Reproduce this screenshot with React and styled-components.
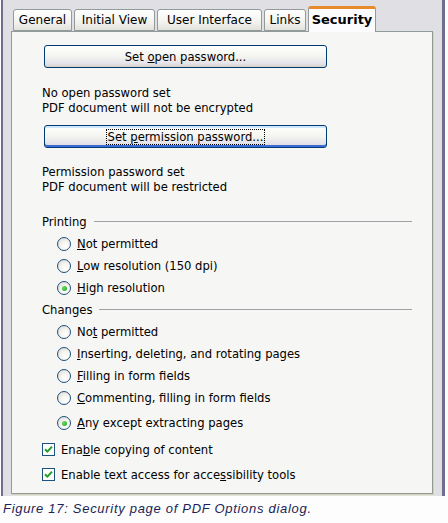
import React from 'react'
import styled, { createGlobalStyle } from 'styled-components'

const GlobalStyle = createGlobalStyle`
  html, body {
    margin: 0;
    padding: 0;
    background: #fdfdfd;
  }
  body {
    font-family: "DejaVu Sans", "Liberation Sans", sans-serif;
    font-size: 11.6px;
    color: #000;
  }
`

const Frame = styled.div`
  margin: 0 3px 0 1px;
  border-left: 2px solid #6f6e8f;
  border-right: 3px solid #6f6e8f;
  background: #e0dfe3;
  padding: 6px 8px 2px 8px;
`

const TabBar = styled.div`
  display: flex;
  align-items: flex-end;
  gap: 2px;
  margin-left: 2px;
  height: 25px;
  position: relative;
  z-index: 1;
`

const Tab = styled.div`
  box-sizing: border-box;
  width: ${p => p.$w}px;
  height: ${p => (p.$active ? 26 : 22)}px;
  margin-bottom: ${p => (p.$active ? -1 : 0)}px;
  border: 1px solid #919b9c;
  border-bottom: ${p => (p.$active ? 'none' : '1px solid #919b9c')};
  border-top: ${p => (p.$active ? '3px solid #e68b2c' : '1px solid #919b9c')};
  border-radius: 3px 3px 0 0;
  background: ${p => (p.$active
    ? '#fcfcfe'
    : 'linear-gradient(#ffffff 0%, #f3f3ef 60%, #e2e1dc 100%)')};
  display: flex;
  align-items: center;
  justify-content: center;
  font-size: ${p => (p.$active ? 13 : 12)}px;
  font-weight: ${p => (p.$active ? 'bold' : 'normal')};
  padding-bottom: ${p => (p.$active ? 3 : 0)}px;
`

const Panel = styled.div`
  box-sizing: border-box;
  width: 422px;
  height: 463px;
  background: #f6f6f4;
  border: 1px solid #919b9c;
  box-shadow: 1px 1px 0 #d0d0bf, 2px 2px 0 #e3e3d8;
  padding: 13px 20px 0 30px;
`

const PushButton = styled.button`
  box-sizing: border-box;
  display: flex;
  align-items: center;
  justify-content: center;
  width: 283px;
  height: 23px;
  margin-left: 2px;
  border: 1px solid #003c74;
  border-radius: 3px;
  background: linear-gradient(#ffffff 0%, #f4f4f0 50%, #e3e2ea 85%, #d6d0c5 100%);
  box-shadow: ${p => (p.$focus ? 'inset 0 -2px 0 #3d6bd6, inset 0 2px 0 #cee7ff' : 'none')};
  font-family: inherit;
  font-size: 11.6px;
  color: #000;
  padding: 0;
`

const FocusText = styled.span`
  outline: ${p => (p.$focus ? '1px dotted #000' : 'none')};
  padding: 0 1px;
  line-height: 14px;
`

const InfoBlock = styled.div`
  margin: ${p => p.$m};
  line-height: 15px;
`

const GroupHead = styled.div`
  display: flex;
  align-items: center;
  height: 22px;
  &::after {
    content: '';
    flex: 1;
    height: 1px;
    background: #a0a0a8;
    margin-left: 7px;
    margin-top: -2px;
  }
`

const Option = styled.label`
  display: flex;
  align-items: center;
  gap: 6px;
  height: ${p => p.$h || 22}px;
  margin-top: ${p => p.$mt || 0}px;
  padding-left: ${p => p.$indent || 0}px;
`

const Radio = styled.span`
  box-sizing: border-box;
  width: 14px;
  height: 14px;
  border-radius: 50%;
  border: 1px solid #1c5180;
  background: radial-gradient(circle at 65% 70%, #ffffff 0%, #f4f3ee 45%, #d6d2c6 100%);
  display: flex;
  align-items: center;
  justify-content: center;
  &::after {
    content: '';
    display: ${p => (p.$checked ? 'block' : 'none')};
    width: 5px;
    height: 5px;
    border-radius: 50%;
    background: radial-gradient(circle at 35% 35%, #5fe05f, #21a121);
  }
`

const Check = styled.span`
  box-sizing: border-box;
  width: 13px;
  height: 13px;
  border: 1px solid #1c5180;
  background: #fff;
  display: flex;
  align-items: center;
  justify-content: center;
`

const Key = styled.span`
  text-decoration: underline;
`

const Caption = styled.div`
  padding: 5px 0 0 3px;
  font-family: "Liberation Sans", Arial, sans-serif;
  font-style: italic;
  font-size: 13px;
  letter-spacing: 0.7px;
  color: #1a1f55;
`

const tabs = [
  { label: 'General', w: 59 },
  { label: 'Initial View', w: 81 },
  { label: 'User Interface', w: 105 },
  { label: 'Links', w: 42 },
  { label: 'Security', w: 68, active: true },
]

const CheckMark = () => (
  <svg width="9" height="9" viewBox="0 0 9 9">
    <path d="M1 4.2 L3.4 6.6 L8 1.6" fill="none" stroke="#21a121" strokeWidth="2" />
  </svg>
)

const App = () => (
  <>
    <GlobalStyle />
    <Frame>
      <TabBar>
        {tabs.map(t => (
          <Tab key={t.label} $w={t.w} $active={t.active}>{t.label}</Tab>
        ))}
      </TabBar>
      <Panel>
        <PushButton>
          <FocusText>Set <Key>o</Key>pen password...</FocusText>
        </PushButton>
        <InfoBlock $m="18px 0 9px 0">
          No open password set<br />
          PDF document will not be encrypted
        </InfoBlock>
        <PushButton $focus>
          <FocusText $focus>Set <Key>p</Key>ermission password...</FocusText>
        </PushButton>
        <InfoBlock $m="17px 0 16px 0">
          Permission password set<br />
          PDF document will be restricted
        </InfoBlock>

        <GroupHead>Printing</GroupHead>
        <Option $indent={15}><Radio /><span><Key>N</Key>ot permitted</span></Option>
        <Option $indent={15}><Radio /><span><Key>L</Key>ow resolution (150 dpi)</span></Option>
        <Option $indent={15}><Radio $checked /><span><Key>H</Key>igh resolution</span></Option>

        <GroupHead>Changes</GroupHead>
        <Option $indent={15}><Radio /><span>No<Key>t</Key> permitted</span></Option>
        <Option $indent={15}><Radio /><span><Key>I</Key>nserting, deleting, and rotating pages</span></Option>
        <Option $indent={15}><Radio /><span><Key>F</Key>illing in form fields</span></Option>
        <Option $indent={15}><Radio /><span><Key>C</Key>ommenting, filling in form fields</span></Option>
        <Option $indent={15} $mt={3}><Radio $checked /><span><Key>A</Key>ny except extracting pages</span></Option>

        <Option $h={25} $mt={3}><Check><CheckMark /></Check><span>Ena<Key>b</Key>le copying of content</span></Option>
        <Option $h={25}><Check><CheckMark /></Check><span>Enable text access for acce<Key>s</Key>sibility tools</span></Option>
      </Panel>
    </Frame>
    <Caption>Figure 17: Security page of PDF Options dialog.</Caption>
  </>
)

export default App
